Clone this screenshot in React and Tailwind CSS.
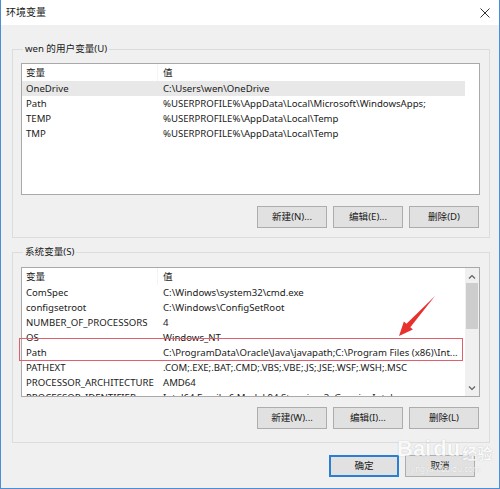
const userVars = [
  ["OneDrive", "C:\\Users\\wen\\OneDrive"],
  ["Path", "%USERPROFILE%\\AppData\\Local\\Microsoft\\WindowsApps;"],
  ["TEMP", "%USERPROFILE%\\AppData\\Local\\Temp"],
  ["TMP", "%USERPROFILE%\\AppData\\Local\\Temp"],
];

const sysVars = [
  ["ComSpec", "C:\\Windows\\system32\\cmd.exe"],
  ["configsetroot", "C:\\Windows\\ConfigSetRoot"],
  ["NUMBER_OF_PROCESSORS", "4"],
  ["OS", "Windows_NT"],
  ["Path", "C:\\ProgramData\\Oracle\\Java\\javapath;C:\\Program Files (x86)\\Int..."],
  ["PATHEXT", ".COM;.EXE;.BAT;.CMD;.VBS;.VBE;.JS;.JSE;.WSF;.WSH;.MSC"],
  ["PROCESSOR_ARCHITECTURE", "AMD64"],
  ["PROCESSOR_IDENTIFIER", "Intel64 Family 6 Model 94 Stepping 3, GenuineIntel"],
];

function VarList({ rows, height, selected, scroll }) {
  return (
    <div className={`flex w-[459px] border border-[#a9a9a9] bg-white overflow-hidden ${height}`}>
      <div className="w-[443px] shrink-0">
        <div className="grid grid-cols-[135px_1fr] h-[17px] leading-[17px]">
          <div className="pl-[4px]">变量</div>
          <div className="pl-[5px] border-l border-[#f4f4f4]">值</div>
        </div>
        {rows.map(([name, value], i) => (
          <div
            key={name}
            className={`grid grid-cols-[135px_1fr] h-[15px] leading-[15px] whitespace-nowrap ${
              i === selected ? "bg-[#e8e8e8]" : ""
            }`}
          >
            <div className="pl-[4px] overflow-hidden">{name}</div>
            <div className="pl-[6px] overflow-hidden">{value}</div>
          </div>
        ))}
      </div>
      {scroll && (
        <div className="w-[14px] bg-[#f0f0f0] flex flex-col items-center">
          <svg width="14" height="14" viewBox="0 0 14 14" className="mt-[2px]">
            <polyline points="4,8.5 7,5.5 10,8.5" fill="none" stroke="#606060" strokeWidth="1.2" />
          </svg>
          <div className="w-[12px] h-[46px] bg-[#cdcdcd] mt-[-1px]" />
          <div className="flex-1" />
          <svg width="14" height="14" viewBox="0 0 14 14" className="mb-[1px]">
            <polyline points="4,5.5 7,8.5 10,5.5" fill="none" stroke="#606060" strokeWidth="1.2" />
          </svg>
        </div>
      )}
    </div>
  );
}

function Btn({ children, primary }) {
  return (
    <button
      className={`w-[70px] h-[22px] bg-[#e1e1e1] text-[#1a1a1a] ${
        primary ? "border-2 border-[#2a7fd4]" : "border border-[#adadad]"
      }`}
    >
      {children}
    </button>
  );
}

function Group({ label, children }) {
  return (
    <fieldset className="border border-[#dcdcdc] pl-[8px] pr-[9px]">
      <legend className="ml-[2px] px-[2px] h-[16px] leading-[16px] text-[#1a1a1a]">
        {label}
      </legend>
      {children}
    </fieldset>
  );
}

export default function App() {
  return (
    <div
      className="relative w-[500px] h-[489px] bg-[#f0f0f0] border-x border-b border-[#4a8fd6] text-[9.6px] text-[#1a1a1a] overflow-hidden"
      style={{ fontFamily: "'Noto Sans', 'Noto Sans CJK SC', sans-serif" }}
    >
      <div className="h-[25px] bg-white flex items-center justify-between pl-[5px] pr-[8px]">
        <span className="text-[10px]">环境变量</span>
        <svg width="12" height="12" viewBox="0 0 12 12">
          <path d="M1.5 1.5 L10.5 10.5 M10.5 1.5 L1.5 10.5" stroke="#333" strokeWidth="1" />
        </svg>
      </div>

      <div className="pl-[11px] pr-[9px] pt-[16px]">
        <Group label="wen 的用户变量(U)">
          <div className="mt-[6px]">
            <VarList rows={userVars} height="h-[132px]" selected={0} />
          </div>
          <div className="flex justify-end gap-[6px] mt-[11px] mb-[9px] pr-[1px]">
            <Btn>新建(N)...</Btn>
            <Btn>编辑(E)...</Btn>
            <Btn>删除(D)</Btn>
          </div>
        </Group>

        <div className="mt-[6px]">
          <Group label="系统变量(S)">
            <div className="mt-[7px]">
              <VarList rows={sysVars} height="h-[130px]" scroll />
            </div>
            <div className="flex justify-end gap-[6px] mt-[10px] mb-[13px] pr-[1px]">
              <Btn>新建(W)...</Btn>
              <Btn>编辑(I)...</Btn>
              <Btn>删除(L)</Btn>
            </div>
          </Group>
        </div>

        <div className="flex justify-end gap-[6px] mt-[12px] pr-[15px]">
          <Btn primary>确定</Btn>
          <Btn>取消</Btn>
        </div>
      </div>

      {/* annotation */}
      <div className="absolute left-[18px] top-[338px] w-[444px] h-[23px] border border-[#e0606e]" />
      <svg className="absolute left-[390px] top-[290px]" width="50" height="50" viewBox="390 290 50 50">
        <polygon
          points="434,296 409.3,327.2 411.9,329.5 398,336 402.9,321.5 405.5,323.8"
          fill="#e8312f"
        />
      </svg>

      {/* watermark */}
      <div className="absolute left-[396px] top-[438px] flex flex-col items-start opacity-70 pointer-events-none">
        <div className="flex items-end">
          <span
            className="text-[22px] font-bold text-white leading-none"
            style={{ fontFamily: "'Liberation Sans', sans-serif", textShadow: "0 0 1px #9a9a9a" }}
          >
            Bai
          </span>
          <span
            className="text-[22px] font-bold text-white leading-none ml-[2px]"
            style={{ fontFamily: "'Liberation Sans', sans-serif", textShadow: "0 0 1px #9a9a9a" }}
          >
            du
          </span>
          <span
            className="text-[15px] font-bold text-white leading-none ml-[2px]"
            style={{ fontFamily: "'Noto Sans CJK SC', sans-serif", textShadow: "0 0 1px #9a9a9a" }}
          >
            经验
          </span>
        </div>
        <span className="text-[8px] text-white ml-[14px] mt-[3px]" style={{ textShadow: "0 0 1px #b0b0b0" }}>
          jingyan.baidu.com
        </span>
      </div>
    </div>
  );
}
